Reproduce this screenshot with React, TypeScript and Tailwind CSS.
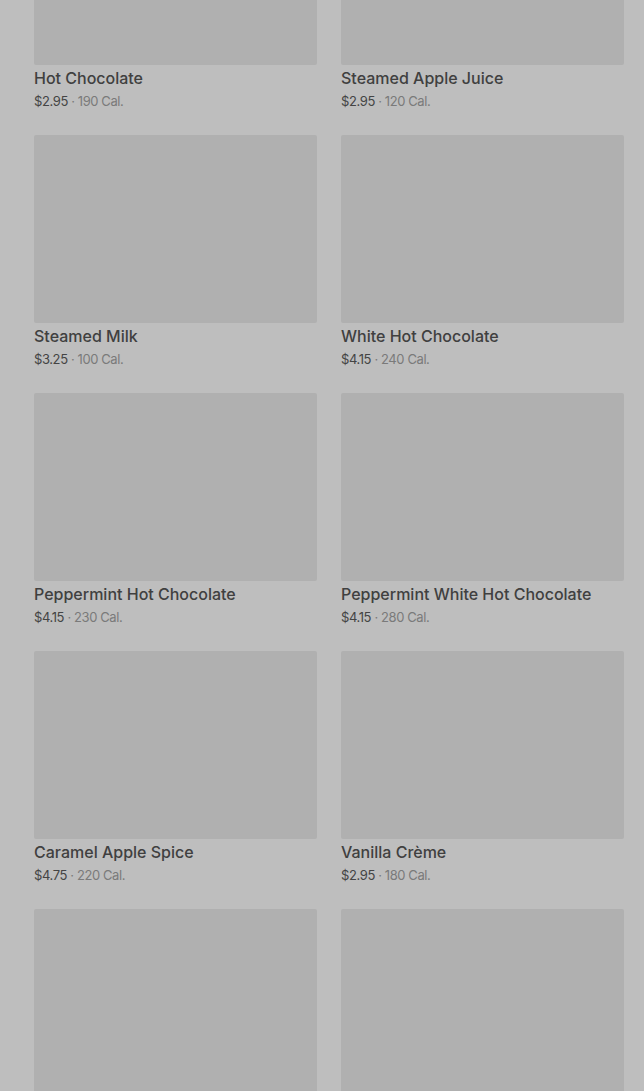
const items = [
  { name: "Hot Chocolate", price: "$2.95", cal: "190 Cal." },
  { name: "Steamed Apple Juice", price: "$2.95", cal: "120 Cal." },
  { name: "Steamed Milk", price: "$3.25", cal: "100 Cal." },
  { name: "White Hot Chocolate", price: "$4.15", cal: "240 Cal." },
  { name: "Peppermint Hot Chocolate", price: "$4.15", cal: "230 Cal." },
  { name: "Peppermint White Hot Chocolate", price: "$4.15", cal: "280 Cal." },
  { name: "Caramel Apple Spice", price: "$4.75", cal: "220 Cal." },
  { name: "Vanilla Crème", price: "$2.95", cal: "180 Cal." },
];

export default function App() {
  return (
    <div className="h-[1091px] overflow-hidden bg-[#bebebe] font-['Inter',Arial,sans-serif]">
      <div className="-mt-[123px] pl-[34px] pr-[20px] grid grid-cols-2 gap-x-6 gap-y-[25px]">
        {items.map((item) => (
          <div key={item.name} className="flex flex-col">
            <div className="h-[188px] rounded-[2px] bg-[#b0b0b0]" />
            <div className="mt-[1px] text-base leading-6 font-medium text-[#404040]">
              {item.name}
            </div>
            <div className="mt-[2px] text-[13px] leading-[18px] tracking-[-0.4px] text-[#444]">
              {item.price} <span className="text-[#7a7a7a]">· {item.cal}</span>
            </div>
          </div>
        ))}
        {/* next row, only the pictures are in view */}
        <div className="h-[188px] rounded-[2px] bg-[#b0b0b0]" />
        <div className="h-[188px] rounded-[2px] bg-[#b0b0b0]" />
      </div>
    </div>
  );
}
